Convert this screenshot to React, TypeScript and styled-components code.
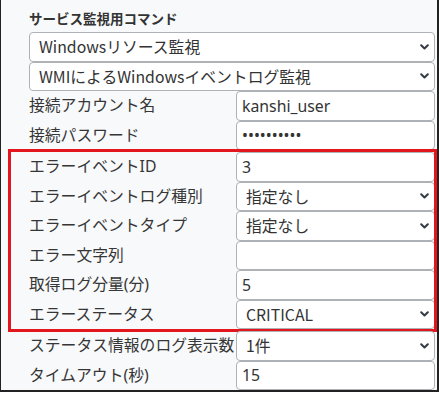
import styled, { createGlobalStyle } from "styled-components";

const GlobalStyle = createGlobalStyle`
  html, body {
    margin: 0;
    padding: 0;
    background: #fff;
  }
  body {
    font-family: "Noto Sans", "Noto Sans CJK JP", sans-serif;
  }
`;

const Panel = styled.div`
  box-sizing: border-box;
  width: 439px;
  height: 392px;
  background: #f8f9fa;
  border-left: 1px solid #222;
  border-right: 2px solid #222;
  border-bottom: 2px solid #222;
  padding: 6px 2px 0 28px;
  color: #333;
`;

const Title = styled.div`
  height: 26px;
  line-height: 26px;
  font-size: 13.5px;
  font-weight: 700;
  color: #333;
`;

const Row = styled.div`
  display: grid;
  grid-template-columns: 207px 1fr;
  height: 29.5px;
`;

const Label = styled.div`
  font-size: 15.8px;
  line-height: 29.5px;
  white-space: nowrap;
  color: #363636;
`;

const Input = styled.input`
  box-sizing: border-box;
  width: 100%;
  height: 100%;
  margin: 0;
  padding: 0 5px;
  border: 1px solid #aeb2b6;
  border-radius: 4px;
  background: #fff;
  color: #333;
  font-family: inherit;
  font-size: 15.8px;
  outline: none;
`;

const SelectBox = styled.div`
  position: relative;
  height: 29.5px;
`;

const Select = styled.select`
  box-sizing: border-box;
  appearance: none;
  width: 100%;
  height: 100%;
  margin: 0;
  padding: 0 28px 0 9px;
  border: 1px solid #aeb2b6;
  border-radius: 4px;
  background: #fff;
  color: #333;
  font-family: "Noto Sans CJK JP", "Noto Sans", sans-serif;
  font-size: 15.8px;
  outline: none;
`;

const Chevron = styled.svg`
  position: absolute;
  right: 6px;
  top: 50%;
  transform: translateY(-50%);
  pointer-events: none;
`;

// red annotation frame drawn over the error-related rows
const Highlight = styled.div`
  position: relative;
  margin: 2px 0;

  &::after {
    content: "";
    position: absolute;
    top: -3px;
    left: -21px;
    right: -2px;
    bottom: -3px;
    border: 3px solid #e3161e;
    pointer-events: none;
  }
`;

function Dropdown({ value }: { value: string }) {
  return (
    <SelectBox>
      <Select defaultValue={value}>
        <option value={value}>{value}</option>
      </Select>
      <Chevron width="9" height="6" viewBox="0 0 9 6">
        <polyline
          points="1.2,1.2 4.5,4.5 7.8,1.2"
          fill="none"
          stroke="#343a40"
          strokeWidth="2"
          strokeLinecap="round"
          strokeLinejoin="round"
        />
      </Chevron>
    </SelectBox>
  );
}

function TextRow({ label, value, type = "text" }: { label: string; value: string; type?: string }) {
  return (
    <Row>
      <Label>{label}</Label>
      <Input type={type} defaultValue={value} readOnly />
    </Row>
  );
}

function SelectRow({ label, value }: { label: string; value: string }) {
  return (
    <Row>
      <Label>{label}</Label>
      <Dropdown value={value} />
    </Row>
  );
}

export default function App() {
  return (
    <>
      <GlobalStyle />
      <Panel>
        <Title>サービス監視用コマンド</Title>
        <Dropdown value="Windowsリソース監視" />
        <Dropdown value="WMIによるWindowsイベントログ監視" />
        <TextRow label="接続アカウント名" value="kanshi_user" />
        <TextRow label="接続パスワード" value="kanshipass" type="password" />

        <Highlight>
          <TextRow label="エラーイベントID" value="3" />
          <SelectRow label="エラーイベントログ種別" value="指定なし" />
          <SelectRow label="エラーイベントタイプ" value="指定なし" />
          <TextRow label="エラー文字列" value="" />
          <TextRow label="取得ログ分量(分)" value="5" />
          <SelectRow label="エラーステータス" value="CRITICAL" />
        </Highlight>

        <SelectRow label="ステータス情報のログ表示数" value="1件" />
        <TextRow label="タイムアウト(秒)" value="15" />
      </Panel>
    </>
  );
}
